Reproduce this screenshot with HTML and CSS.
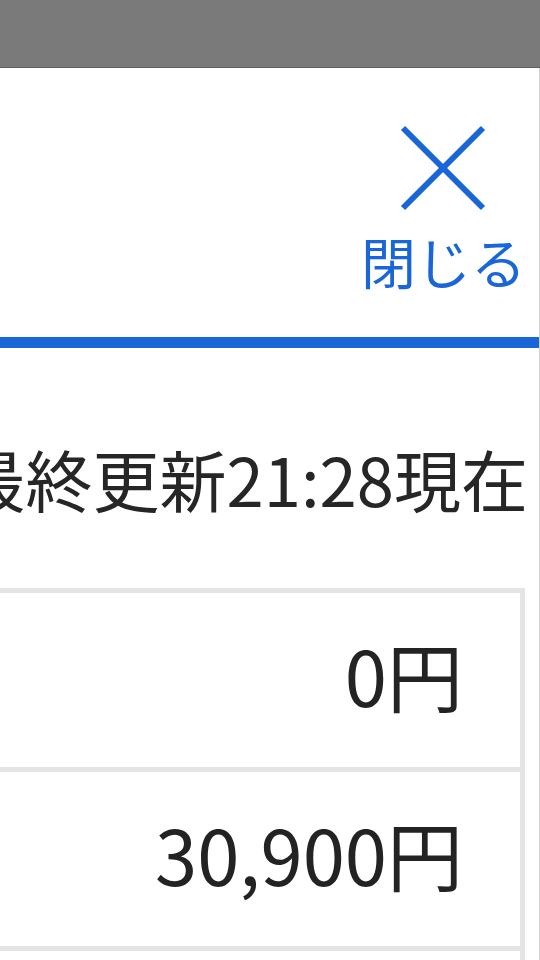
FILE: index.html
```html
<!DOCTYPE html>
<html lang="ja">
<head>
<meta charset="utf-8">
<title>閉じる</title>
<link rel="stylesheet" href="styles.css">
</head>
<body>
<div class="topbar"></div>
<div class="sheet">
  <header class="header">
    <button class="close" type="button">
      <svg class="close-icon" viewBox="0 0 86 86" width="86" height="86" aria-hidden="true">
        <line x1="3" y1="3" x2="83" y2="83"/>
        <line x1="83" y1="3" x2="3" y2="83"/>
      </svg>
      <span class="close-label">閉じる</span>
    </button>
  </header>
  <main class="content">
    <div class="updated"><span>最終更新21:28現在</span></div>
    <div class="table">
      <div class="row"><span class="amount">0円</span></div>
      <div class="row"><span class="amount">30,900円</span></div>
      <div class="row"><span class="amount"></span></div>
    </div>
  </main>
</div>
</body>
</html>
```
FILE: styles.css
```css
html, body {
  margin: 0;
  padding: 0;
  height: 100%;
  overflow: hidden;
  background: #ffffff;
  font-family: "Noto Sans CJK JP", "Noto Sans", sans-serif;
  color: #232323;
}

.topbar {
  height: 67px;
  background: #7a7a7a;
  border-bottom: 1px solid #5f5f5f;
}

.sheet {
  background: #ffffff;
  border-right: 1px solid #d0d0d0;
}

.header {
  height: 280px;
  box-sizing: border-box;
  display: flex;
  justify-content: flex-end;
  align-items: flex-start;
  padding: 57px 13px 0 0;
  border-bottom: 11px solid #1866d7;
}

.close {
  display: flex;
  flex-direction: column;
  align-items: center;
  gap: 22px;
  background: none;
  border: 0;
  padding: 0;
  margin: 0;
  font: inherit;
  cursor: pointer;
}

.close-icon {
  display: block;
  stroke: #1866d7;
  stroke-width: 6;
  fill: none;
}

.close-label {
  display: block;
  font-size: 55px;
  line-height: 1;
  color: #1866d7;
  white-space: nowrap;
}

.content {
  padding-top: 96px;
}

.updated {
  display: flex;
  justify-content: flex-end;
  padding-right: 11px;
  font-size: 67px;
  line-height: 1;
  white-space: nowrap;
  color: #262626;
}

.updated span {
  flex: none;
}

.table {
  margin: 77px 14px 0 -10px;
  border: 5px solid #e4e4e4;
  border-bottom: 0;
}

.row {
  height: 174px;
  box-sizing: border-box;
  display: flex;
  align-items: center;
  justify-content: flex-end;
  padding: 0 57px 12px 0;
  border-bottom: 5px solid #e4e4e4;
  height: 179px;
}

.amount {
  font-size: 76px;
  line-height: 1;
  color: #232323;
  white-space: nowrap;
}
```
